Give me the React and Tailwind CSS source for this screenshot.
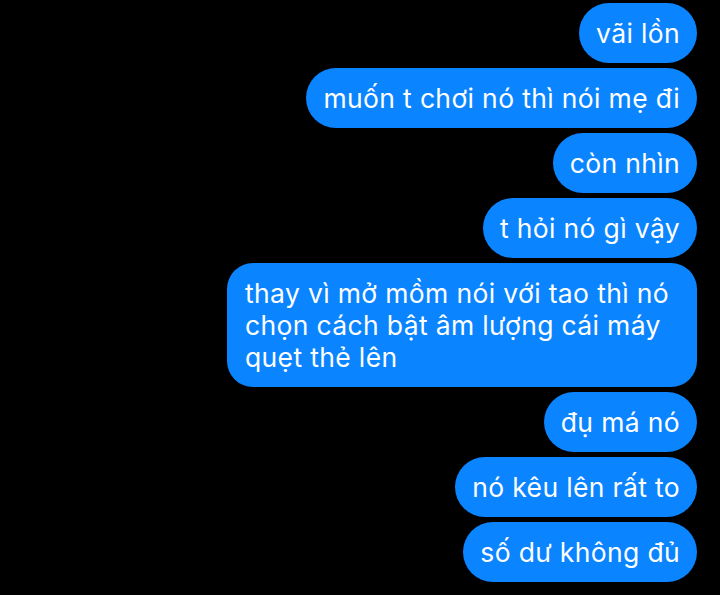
import React from 'react';

const messages = [
  ['vãi lồn'],
  ['muốn t chơi nó thì nói mẹ đi'],
  ['còn nhìn'],
  ['t hỏi nó gì vậy'],
  ['thay vì mở mồm nói với tao thì nó', 'chọn cách bật âm lượng cái máy', 'quẹt thẻ lên'],
  ['đụ má nó'],
  ['nó kêu lên rất to'],
  ['số dư không đủ'],
];

const Bubble = ({ lines }) => {
  const multi = lines.length > 1;
  return (
    <div
      className={`bg-[#0a84ff] text-white text-[26.5px] leading-[32px] tracking-[0.35px] py-[14px] ${
        multi ? 'rounded-[26px] pl-[18px] pr-[28px]' : 'rounded-full whitespace-nowrap px-[17px]'
      }`}
    >
      {lines.map((line, i) => (
        <div key={i}>{line}</div>
      ))}
    </div>
  );
};

export default function App() {
  return (
    <div
      className="w-[720px] h-[595px] bg-black overflow-hidden flex flex-col items-end gap-[5px] pt-[3px] pr-[23px]"
      style={{ fontFamily: 'Inter, "Noto Sans", sans-serif' }}
    >
      {messages.map((lines, i) => (
        <Bubble key={i} lines={lines} />
      ))}
    </div>
  );
}
